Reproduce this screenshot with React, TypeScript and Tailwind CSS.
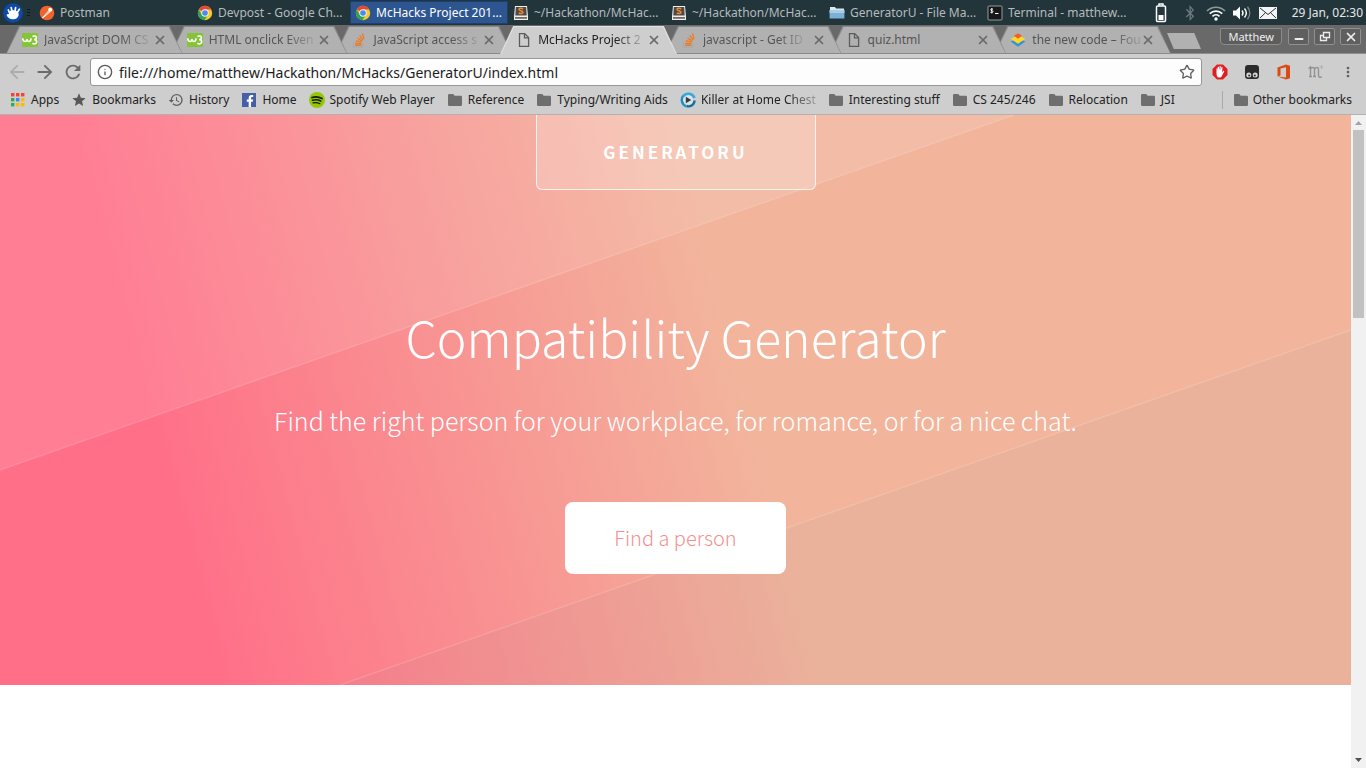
import type { ReactNode } from 'react'
import clsx from 'clsx'
import { Info, Minus, Star, X } from 'lucide-react'
import { FaBluetoothB, FaFacebookF } from 'react-icons/fa'
import { MdArrowBack, MdArrowForward, MdHistory, MdMoreVert, MdRefresh, MdStar } from 'react-icons/md'

/* ---------- icons ---------- */

function ChromeIcon() {
  return (
    <svg viewBox="0 0 16 16" className="size-4">
      <circle cx="8" cy="8" r="7.2" fill="#fbc926" />
      <path d="M8 8 1.8 4.4A7.2 7.2 0 0 1 14.3 4.5H8z" fill="#e2493b" />
      <path d="M1.8 4.4A7.2 7.2 0 0 0 7.4 15.2L11 9.7 8 8 4.9 9.8z" fill="#2fa25a" />
      <circle cx="8" cy="8" r="3.7" fill="#f2f2f2" />
      <circle cx="8" cy="8" r="2.8" fill="#4a8af0" />
    </svg>
  )
}

function PostmanIcon() {
  return (
    <svg viewBox="0 0 16 16" className="size-4">
      <circle cx="8" cy="8" r="7.3" fill="#f0632d" />
      <path d="M3 12.8 9.6 5.4l1.6 1.5-5.6 5.2z" fill="#fff" />
      <path d="M6 9.2 9.6 5.4l1.6 1.5-3.6 3.4z" fill="#f7c4ae" />
      <circle cx="11.2" cy="4.8" r="2" fill="#fff" />
      <path d="m2.7 13 1.4-1.6 1.1 1z" fill="#fff" />
    </svg>
  )
}

function SublimeIcon() {
  return (
    <svg viewBox="0 0 16 16" className="size-4">
      <path d="M2 1h12l1 10.500V15H1v-3.500z" fill="#f1efec" />
      <path d="M2.800 2h10.400l.5 8.600H2.300z" fill="#4b4b4b" />
      <path d="M2 12h12v1.800H2z" fill="#6f6a66" />
      <path d="M10.200 3.800C8 3 6 3.200 6 4.500s4 1.200 4 2.700c0 1.400-2.300 1.600-4.200.8" fill="none" stroke="#f08a28" strokeWidth="1.500" />
    </svg>
  )
}

function FilesIcon() {
  return (
    <svg viewBox="0 0 16 16" className="size-4">
      <path d="M1 2h5l1 1.500h8V7H1z" fill="#dfe7ec" />
      <path d="M.6 5h14.800v8.500H.6z" fill="#7db0d6" />
      <path d="M.6 5h14.800v3H.6z" fill="#a9cde6" />
    </svg>
  )
}

function TerminalIcon() {
  return (
    <svg viewBox="0 0 16 16" className="size-4">
      <rect x="1" y="1" width="14" height="14" rx="1" fill="#16181a" stroke="#9a9a9a" />
      <path d="M6 4.300c-1.500-.6-2.500-.2-2.400.6.1 1 2.400.7 2.400 1.700 0 .9-1.300 1.200-2.600.6M4.800 3v5.500" fill="none" stroke="#fff" strokeWidth=".9" />
      <path d="M8 8.500h3.500" stroke="#fff" />
    </svg>
  )
}

function W3Icon() {
  return (
    <svg viewBox="0 0 16 16" className="size-4">
      <rect y="1" width="16" height="14" rx="1" fill="#84c436" />
      <path d="M.8 6.200c0 2.200 1 3.200 2.300 3.200S5 8.300 5 7c0 1.400.7 2.400 2 2.400S9 8.200 9 6.200" fill="none" stroke="#fff" strokeWidth="1.500" />
      <path d="M10.500 4.500c1.500-1 3.900-.6 3.900 1.200 0 1.300-1 1.900-2.300 1.900 1.500 0 2.600.7 2.600 2.200 0 2.200-2.800 2.700-4.300 1.400" fill="none" stroke="#fff" strokeWidth="1.600" />
    </svg>
  )
}

function StackIcon() {
  return (
    <svg viewBox="0 0 16 16" className="size-4" fill="none">
      <path d="M2.500 10.500v4.700h9v-4.700" stroke="#a9a9a9" strokeWidth="1.200" />
      <path d="M4 13.300h6.200M4.200 11.200l6 .5M5 8.700l5.600 1.600M6.400 6l4.800 3.100M8.600 3.500l3.400 4.600M11.500 1.500l1.400 5.500" stroke="#ee7d27" strokeWidth="1.400" />
    </svg>
  )
}

function FileIcon() {
  return (
    <svg viewBox="0 0 16 16" className="size-4" fill="none" stroke="#5c5c5c" strokeWidth="1.300">
      <path d="M3.500 1.600h5.200l3.900 3.900v8.900H3.500z" />
      <path d="M8.500 1.800v4h4" />
    </svg>
  )
}

function NewCodeIcon() {
  return (
    <svg viewBox="0 0 16 16" className="size-4">
      <path d="m.6 9.500 7.400-3 7.400 3L8 14.800z" fill="#3193dc" />
      <path d="M.6 6.700 8 3.500l7.400 3.200L8 11.800z" fill="#ffd91f" />
      <path d="M4 3.800 8 1.200l4 2.600L8 6.800z" fill="#f2602a" />
    </svg>
  )
}

function FolderIcon() {
  return (
    <svg viewBox="0 0 16 16" className="size-4" fill="#6e6e6e">
      <path d="M1 3.200A1.200 1.200 0 0 1 2.200 2h4l1.500 1.800h6.100A1.200 1.200 0 0 1 15 5v7.800a1.200 1.200 0 0 1-1.200 1.200H2.200A1.200 1.200 0 0 1 1 12.800z" />
    </svg>
  )
}

const appDots = ['#f44336', '#f44336', '#f44336', '#34a853', '#4285f4', '#fbbc05', '#34a853', '#fbbc05', '#fbbc05']

function AppsIcon() {
  return (
    <svg viewBox="0 0 16 16" className="size-4">
      {appDots.map((color, i) => (
        <rect key={i} x={1 + (i % 3) * 5} y={1 + Math.floor(i / 3) * 5} width="3.400" height="3.400" fill={color} />
      ))}
    </svg>
  )
}

function FacebookIcon() {
  return (
    <span className="mx-px flex size-[14px] items-end justify-end bg-[#4560a8]">
      <FaFacebookF className="size-3 text-white" />
    </span>
  )
}

function SpotifyIcon() {
  return (
    <svg viewBox="0 0 16 16" className="size-4">
      <circle cx="8" cy="8" r="8" fill="#94c804" />
      <g fill="none" stroke="#171c05" strokeLinecap="round">
        <path d="M3 5.500c3.300-1 7-.7 10 1" strokeWidth="1.800" />
        <path d="M3.500 8.300c2.900-.8 6-.5 8.400.9" strokeWidth="1.500" />
        <path d="M4 10.900c2.300-.6 4.800-.4 6.900.8" strokeWidth="1.200" />
      </g>
    </svg>
  )
}

function KillerIcon() {
  return (
    <svg viewBox="0 0 16 16" className="size-4" fill="none">
      <circle cx="8" cy="8" r="5" fill="#dbe5ea" />
      <path d="M6 14.300C1.500 12.500.5 6.500 3.500 3.500" stroke="#1b8fc6" strokeWidth="2.400" />
      <path d="M3 4.500C6 .5 12.500.8 14.500 6" stroke="#36a9dd" strokeWidth="2.600" />
      <path d="M14.500 8.500c0 4-4 6.800-8 5.500" stroke="#156f9f" strokeWidth="2.400" />
      <path d="m5.800 4.800 5.500 3.200-5.500 3.200z" fill="#3b3b3b" />
    </svg>
  )
}

function WhiskerLogo() {
  return (
    <svg viewBox="0 0 20 20" className="size-5">
      <circle cx="10" cy="10" r="9.800" fill="#0b4aa8" />
      <path d="M6.500 8.500C7.500 7.300 10 7 12 7.500c2.500.5 4 2.300 3.700 4.500-.4 2.800-3.400 4.600-6.200 4.300-3-.3-4.700-1.900-5.600-3.600-.7-1.300.8-2.300 2-1.400z" fill="#fff" />
      <path d="M6.800 10.500 5.300 7M9 8.500 8.200 4.500M12 8.500l.6-4M14.300 9.500l2-3.300" stroke="#fff" strokeWidth="1.700" strokeLinecap="round" />
    </svg>
  )
}

/* ---------- desktop panel ---------- */

const tasks = [
  { icon: <PostmanIcon />, title: 'Postman' },
  { icon: <ChromeIcon />, title: 'Devpost - Google Ch...' },
  { icon: <ChromeIcon />, title: 'McHacks Project 201...', active: true },
  { icon: <SublimeIcon />, title: '~/Hackathon/McHac...' },
  { icon: <SublimeIcon />, title: '~/Hackathon/McHac...' },
  { icon: <FilesIcon />, title: 'GeneratorU - File Ma...' },
  { icon: <TerminalIcon />, title: 'Terminal - matthew...' },
]

function DesktopPanel() {
  return (
    <header className="flex h-[25px] items-center bg-[#22353b] text-[12px] text-[#b5babb]">
      <button aria-label="Applications" className="ml-[3px] shrink-0">
        <WhiskerLogo />
      </button>
      <div className="mx-1 flex w-[3px] flex-col gap-[2px]">
        <span className="h-px bg-[#10191c]" />
        <span className="h-px bg-[#10191c]" />
        <span className="h-px bg-[#10191c]" />
      </div>
      <nav className="flex min-w-0 max-w-[1106px] flex-1">
        {tasks.map((task, i) => (
          <button
            key={i}
            className={clsx(
              'flex h-[23px] min-w-0 flex-1 items-center gap-[5px] whitespace-nowrap border px-1',
              task.active ? 'border-[#1c3f70] bg-[#2d5590] text-white' : 'border-transparent'
            )}
          >
            <span className="shrink-0">{task.icon}</span>
            <span className="overflow-hidden">{task.title}</span>
          </button>
        ))}
      </nav>
      <div className="ml-auto flex shrink-0 items-center pr-[3px]">
        <svg viewBox="0 0 12 20" className="mr-[15px] h-5 w-3" fill="none" stroke="#fff" strokeWidth="1.500">
          <path d="M4 2.500V1h4v1.500" />
          <rect x="1.500" y="3" width="9" height="15.500" rx="1" />
          <path d="M3.500 12h5v5h-5z" fill="#fff" stroke="none" />
        </svg>
        <FaBluetoothB className="mr-2 size-4 text-[#6d7a7e]" />
        <svg viewBox="0 0 20 16" className="mr-[6px] h-4 w-5" fill="none" strokeWidth="1.700">
          <path d="M1 6c5-5 13-5 18 0" stroke="#8d989b" />
          <path d="M3.800 8.700c3.500-3.500 8.900-3.500 12.400 0M6.500 11.400c2-2 5-2 7 0" stroke="#fff" />
          <circle cx="10" cy="14" r="1.700" fill="#fff" />
        </svg>
        <svg viewBox="0 0 20 16" className="mr-[7px] h-4 w-5" fill="none" strokeWidth="1.400">
          <path d="M1 5.500h3l4-4v13l-4-4H1z" fill="#fff" />
          <path d="M10 5.500c1.200 1.500 1.200 3.500 0 5M12.500 3.500c2.200 2.700 2.200 6.300 0 9" stroke="#fff" />
          <path d="M15.500 1.800c3 3.800 3 8.700 0 12.400" stroke="#7c888b" />
        </svg>
        <svg viewBox="0 0 18 12" className="mr-[15px] h-3 w-[18px]">
          <path d="M0 0h18v12H0z" fill="#f4f4f4" />
          <path d="m1 1 8 6.500L17 1M1 11l5.500-5.300M17 11l-5.500-5.300" fill="none" stroke="#22353b" />
        </svg>
        <span className="text-[#e6e8e8]">29 Jan, 02:30</span>
      </div>
    </header>
  )
}

/* ---------- browser ---------- */

const tabs = [
  { icon: <W3Icon />, title: 'JavaScript DOM CS' },
  { icon: <W3Icon />, title: 'HTML onclick Even' },
  { icon: <StackIcon />, title: 'JavaScript access s' },
  { icon: <FileIcon />, title: 'McHacks Project 2', active: true },
  { icon: <StackIcon />, title: 'javascript - Get ID' },
  { icon: <FileIcon />, title: 'quiz.html', short: true },
  { icon: <NewCodeIcon />, title: 'the new code – Fou' },
]

const tabShape = '[clip-path:polygon(13px_0,calc(100%-13px)_0,100%_100%,0_100%)]'

function TabStrip() {
  return (
    <div className="flex h-[29px] items-end border-b border-[#8e8e8e] bg-[#696969] pl-[6px]">
      <div role="tablist" className="relative z-0 -mb-px flex h-7 min-w-0 max-w-[1153px] flex-1">
        {tabs.map((tab, i) => (
          <div
            key={i}
            role="tab"
            aria-selected={!!tab.active}
            className="relative flex min-w-0 flex-1 items-center justify-between pl-4 pr-1 text-[12px]"
            style={{ zIndex: tab.active ? 20 : 10 - i }}
          >
            <div className={clsx('absolute inset-y-0 left-0 -right-3', tabShape, tab.active ? 'bg-[#e2e2e2]' : 'bg-[#8a8a8a]')}>
              <div
                className={clsx(
                  'absolute inset-x-px top-px',
                  tabShape,
                  tab.active ? 'bottom-0 bg-[#cecece]' : 'bottom-px bg-[#b1b1b1]'
                )}
              />
            </div>
            <div className="relative flex items-center gap-[6px] whitespace-nowrap">
              {tab.icon}
              <span
                className={clsx(
                  !tab.short && '[mask-image:linear-gradient(to_right,#000_75%,#0003)]',
                  tab.active ? 'text-[#222]' : 'text-[#555]'
                )}
              >
                {tab.title}
              </span>
            </div>
            <button aria-label={`Close ${tab.title}`} className="relative shrink-0">
              <X className="size-[14px] text-[#6a6a6a]" strokeWidth={3} />
            </button>
          </div>
        ))}
      </div>
      <button
        aria-label="New tab"
        className="mb-1 ml-2 h-4 w-[34px] shrink-0 bg-[#b1b1b1] [clip-path:polygon(0_0,80%_0,100%_100%,20%_100%)]"
      />
      <div className="mb-2 ml-auto flex shrink-0 gap-[5px] pl-3 pr-[5px] text-[#eee]">
        <button className="mr-px h-[17px] rounded-b border border-[#8c8c8c] bg-[#5d5d5d] px-[7px] text-[11px] leading-[15px]">
          Matthew
        </button>
        <WindowButton label="Minimize">
          <Minus className="mt-1 size-3" strokeWidth={4} />
        </WindowButton>
        <WindowButton label="Restore">
          <svg viewBox="0 0 12 12" className="size-3" fill="none" stroke="#eee" strokeWidth="1.300">
            <path d="M4.500 1.500h6v5h-6z" />
            <path d="M4.500 4.500h-3v5h6v-3" />
          </svg>
        </WindowButton>
        <WindowButton label="Close">
          <X className="size-[14px]" strokeWidth={3} />
        </WindowButton>
      </div>
    </div>
  )
}

function WindowButton({ label, children }: { label: string; children: ReactNode }) {
  return (
    <button
      aria-label={label}
      className="flex h-[17px] w-[21px] items-center justify-center rounded-[2px] border border-[#909090] bg-[#5f5f5f]"
    >
      {children}
    </button>
  )
}

function AddressBar() {
  return (
    <div className="flex h-8 items-center px-[10px] pt-1">
      <div className="-ml-1 flex shrink-0 gap-[6px] pr-[6px] text-[#6a6a6a]">
        <button aria-label="Back" className="text-[#adadad]">
          <MdArrowBack className="size-[22px]" />
        </button>
        <button aria-label="Forward">
          <MdArrowForward className="size-[22px]" />
        </button>
        <button aria-label="Reload">
          <MdRefresh className="size-[22px]" />
        </button>
      </div>
      <label className="flex h-7 min-w-0 flex-1 items-center gap-[6px] rounded-[3px] border border-[#969696] bg-[#fdfdfd] px-[6px]">
        <Info className="size-4 shrink-0 text-[#5a5a5a]" />
        <input
          type="text"
          aria-label="Address"
          defaultValue="file:///home/matthew/Hackathon/McHacks/GeneratorU/index.html"
          className="min-w-0 flex-1 bg-transparent text-[14px] text-[#1c1c1c] outline-none"
        />
        <Star className="size-4 shrink-0 text-[#5f5f5f]" />
      </label>
      <div className="flex shrink-0 items-center gap-4 pl-[10px]">
        <button aria-label="AdBlock">
          <svg viewBox="0 0 16 16" className="size-4">
            <path d="M5 .5h6L15.500 5v6L11 15.500H5L.5 11V5z" fill="#e01f22" />
            <path d="M4.500 8.500V4.800c0-.8 1-.8 1 0V7l.3-4c0-.8 1-.8 1.100 0L7.200 6.500l.4-4c.1-.8 1.100-.7 1.100 0v4l.8-3.200c.2-.7 1.100-.5 1 .2l-.4 4.800 1-1.200c.6-.6 1.400-.1 1 .6l-2.400 4.500c-.6 1-1.500 1.300-2.600 1.300-2 0-2.600-1.500-2.600-5z" fill="#fff" />
          </svg>
        </button>
        <button aria-label="Tampermonkey">
          <svg viewBox="0 0 16 16" className="size-4">
            <rect x="1" y="1" width="14" height="14" rx="3" fill="#2b2b2b" />
            <circle cx="4.800" cy="11" r="2.500" fill="#d8d8d8" />
            <circle cx="11.200" cy="11" r="2.500" fill="#d8d8d8" />
            <circle cx="5.200" cy="11.500" r="1" fill="#2b2b2b" />
            <circle cx="10.800" cy="11.500" r="1" fill="#2b2b2b" />
          </svg>
        </button>
        <button aria-label="Office">
          <svg viewBox="0 0 16 16" className="size-4">
            <path d="M1.500 3.500 10 .5l4 1.200v12.600l-4 1.200-8.500-3 8.500 1V3.200L4.500 4.500v7l-3 1z" fill="#dc4a13" />
          </svg>
        </button>
        <button aria-label="Metadata">
          <svg viewBox="0 0 16 16" className="size-4" fill="none" stroke="#929292">
            <path d="M.5 4.500 2.500 3v9.500M1 12.500h3M2.500 5c1.500-2 4-2 4 .5v7M5 12.500h3M6.500 5c1.500-2 4-2 4 .5v6c0 2 2 2.500 3 1" strokeWidth="1.400" />
            <path d="M13.500 1v4M11.500 3h4" stroke="#b0b0b0" />
          </svg>
        </button>
        <button aria-label="Menu">
          <MdMoreVert className="size-4 text-[#5f5f5f]" />
        </button>
      </div>
    </div>
  )
}

const bookmarks = [
  { icon: <AppsIcon />, title: 'Apps' },
  { icon: <MdStar className="size-4 text-[#585858]" />, title: 'Bookmarks' },
  { icon: <MdHistory className="size-4 text-[#5f5f5f]" />, title: 'History' },
  { icon: <FacebookIcon />, title: 'Home' },
  { icon: <SpotifyIcon />, title: 'Spotify Web Player' },
  { icon: <FolderIcon />, title: 'Reference' },
  { icon: <FolderIcon />, title: 'Typing/Writing Aids' },
  { icon: <KillerIcon />, title: 'Killer at Home Chest', faded: true },
  { icon: <FolderIcon />, title: 'Interesting stuff' },
  { icon: <FolderIcon />, title: 'CS 245/246' },
  { icon: <FolderIcon />, title: 'Relocation' },
  { icon: <FolderIcon />, title: 'JSI' },
]

function BookmarksBar() {
  return (
    <div className="flex h-7 items-center pl-[10px] pr-[14px] text-[12px] text-[#222]">
      <nav className="flex min-w-0 flex-1 gap-3 overflow-hidden whitespace-nowrap">
        {bookmarks.map((b) => (
          <button key={b.title} className="flex items-center gap-[5px]">
            {b.icon}
            <span className={clsx(b.faded && '[mask-image:linear-gradient(to_right,#000_75%,#0004)]')}>{b.title}</span>
          </button>
        ))}
      </nav>
      <button className="flex items-center gap-1 whitespace-nowrap border-l border-[#aaa] pl-[10px]">
        <FolderIcon />
        Other bookmarks
      </button>
    </div>
  )
}

function Scrollbar() {
  return (
    <div aria-hidden="true" className="flex w-[15px] shrink-0 flex-col items-center bg-[#f1f1f1]">
      <svg viewBox="0 0 15 15" className="size-[15px]">
        <path d="M4 10h7L7.500 6z" fill="#a3a3a3" />
      </svg>
      <div className="h-[188px] w-[11px] bg-[#c1c1c1]" />
      <svg viewBox="0 0 15 15" className="mt-auto size-[15px]">
        <path d="M4 5h7L7.500 9z" fill="#505050" />
      </svg>
    </div>
  )
}

/* ---------- page ---------- */

function Landing() {
  return (
    <main className="min-w-0 flex-1 bg-white font-['Source_Sans_Pro','Noto_Sans_CJK_SC',sans-serif]">
      <section className="relative flex flex-col items-center bg-[linear-gradient(75deg,#ff7088_15%,#f2b59c_55%)] pb-[111px] text-white">
        <svg
          viewBox="0 0 1351 570"
          preserveAspectRatio="none"
          aria-hidden="true"
          className="absolute inset-0 size-full"
        >
          <path d="M0 0H1014L0 355z" fill="#fff" fillOpacity=".1" />
          <path d="M340 570 1351 215V570z" fill="#909090" fillOpacity=".07" />
          <path d="M1014 0 0 355M340 570 1351 215" stroke="#fff" strokeOpacity=".14" strokeWidth="1.500" />
        </svg>
        <div className="relative flex h-[75px] w-[280px] items-center justify-center rounded-b-md border border-t-0 border-white/80 bg-white/20">
          <a href="#" className="text-[17px] font-semibold leading-6 tracking-[3px]">GENERATORU</a>
        </div>
        <h1 className="relative mt-[114px] text-[50px] font-extralight leading-[64px]">Compatibility Generator</h1>
        <p className="relative mt-8 text-[25px] font-light leading-10">
          Find the right person for your workplace, for romance, or for a nice chat.
        </p>
        <button className="relative mt-[62px] h-[72px] rounded-lg bg-white px-[49px] text-[20px] font-light text-[#f28f8f]">
          Find a person
        </button>
      </section>
    </main>
  )
}

export default function App() {
  return (
    <div className="flex min-h-screen flex-col font-['Noto_Sans',sans-serif]">
      <DesktopPanel />
      <TabStrip />
      <div className="border-b border-[#b4b0b0] bg-[#cecece]">
        <AddressBar />
        <BookmarksBar />
      </div>
      <div className="flex flex-1">
        <Landing />
        <Scrollbar />
      </div>
    </div>
  )
}
